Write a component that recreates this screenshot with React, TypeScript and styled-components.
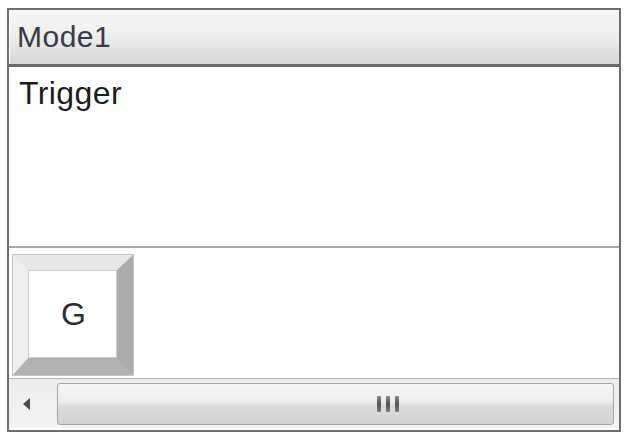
import styled, { createGlobalStyle } from "styled-components";

const GlobalStyle = createGlobalStyle`
	html, body {
		margin: 0;
		padding: 0;
		background: #ffffff;
	}
	body {
		font-family: "Liberation Sans", Arial, sans-serif;
	}
`;

const Frame = styled.div`
	box-sizing: border-box;
	margin: 8px 0 0 7px;
	width: 614px;
	height: 424px;
	border: 2px solid #6e6e6e;
	display: flex;
	flex-direction: column;
	background: #ffffff;
`;

const Header = styled.div`
	height: 54px;
	border-bottom: 3px solid #686868;
	background: linear-gradient(
		to bottom,
		#f6f6f6 0%,
		#efefef 45%,
		#e4e4e4 70%,
		#d6d6d6 100%
	);
	box-shadow: inset 1px 1px 0 #ffffff;
	display: flex;
	align-items: center;
	padding-left: 8px;
`;

const HeaderTitle = styled.span`
	font-size: 30px;
	line-height: 1;
	color: #3a3a44;
	letter-spacing: 0.5px;
`;

const Content = styled.div`
	height: 181px;
	border-bottom: 2px solid #a8a8a8;
	padding: 10px 0 0 10px;
	box-sizing: border-box;
`;

const Label = styled.div`
	font-size: 32px;
	line-height: 1;
	color: #1c1c1c;
	letter-spacing: 0.4px;
`;

const ButtonArea = styled.div`
	height: 130px;
	box-sizing: border-box;
	padding: 7px 0 0 4px;
`;

const KeyButton = styled.div`
	box-sizing: border-box;
	width: 120px;
	height: 120px;
	border-style: solid;
	border-width: 15px 16px 17px 15px;
	border-color: #e7e7e7 #ababab #b2b2b2 #eeeeee;
	box-shadow: 0 0 0 1px #c6c6c6;
	display: flex;
`;

const KeyFace = styled.div`
	flex: 1;
	border: 1px solid #cdcdcd;
	background: #ffffff;
	display: flex;
	align-items: center;
	justify-content: center;
	font-size: 32px;
	color: #2e2e2e;
	padding-left: 2px;
`;

const ScrollBar = styled.div`
	height: 50px;
	box-sizing: border-box;
	border-top: 1px solid #b4b4b4;
	background: linear-gradient(to bottom, #ececec, #f4f4f4);
	display: flex;
	padding: 4px 5px 3px 0;
`;

const ArrowButton = styled.div`
	width: 48px;
	box-sizing: border-box;
	padding-left: 14px;
	display: flex;
	align-items: center;
`;

const Thumb = styled.div`
	flex: 1;
	box-sizing: border-box;
	border: 1px solid #a4a4a4;
	border-radius: 3px;
	background: linear-gradient(
		to bottom,
		#f7f7f7 0%,
		#ececec 45%,
		#dcdcdc 55%,
		#d2d2d2 100%
	);
	display: flex;
	align-items: center;
	justify-content: center;
	padding-left: 104px;
`;

const Grip = styled.div`
	display: flex;
	gap: 5px;
`;

const GripBar = styled.span`
	width: 4px;
	height: 16px;
	border-radius: 1px;
	background: linear-gradient(to bottom, #8a8a8a, #555555, #7a7a7a);
`;

export default function App() {
	return (
		<>
			<GlobalStyle />
			<Frame>
				<Header>
					<HeaderTitle>Mode1</HeaderTitle>
				</Header>
				<Content>
					<Label>Trigger</Label>
				</Content>
				<ButtonArea>
					<KeyButton>
						<KeyFace>G</KeyFace>
					</KeyButton>
				</ButtonArea>
				<ScrollBar>
					<ArrowButton>
						<svg width="8" height="12" viewBox="0 0 8 12">
							<polygon points="7,0 0,6 7,12" fill="#4a4a4a" />
						</svg>
					</ArrowButton>
					<Thumb>
						<Grip>
							<GripBar />
							<GripBar />
							<GripBar />
						</Grip>
					</Thumb>
				</ScrollBar>
			</Frame>
		</>
	);
}
